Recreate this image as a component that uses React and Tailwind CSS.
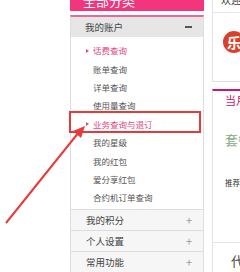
const font = { fontFamily: "'Noto Sans CJK SC', 'Noto Sans', sans-serif" };

const items = [
  { label: "话费查询", active: true },
  { label: "账单查询" },
  { label: "详单查询" },
  { label: "使用量查询" },
  { label: "业务查询与退订", active: true },
  { label: "我的星级" },
  { label: "我的红包" },
  { label: "爱分享红包" },
  { label: "合约机订单查询" },
];

const sections = ["我的积分", "个人设置", "常用功能"];

export default function App() {
  return (
    <div className="relative flex w-[240px] h-[272px] overflow-hidden bg-white whitespace-nowrap" style={font}>
      <div className="w-[70px] shrink-0" />

      {/* left menu */}
      <div className="w-[134px] shrink-0 flex flex-col">
        <div className="h-[11px] overflow-hidden bg-[#f2357c] pl-[13px]">
          <div className="-mt-[7px] text-[13px] leading-[15px] text-white">全部分类</div>
        </div>
        <div className="h-[5px]" />
        <div className="flex-1 flex flex-col border-t-2 border-[#e8689a] border-x border-x-[#dedede]">
          <div className="h-[20px] shrink-0 flex items-center justify-between bg-[#e6e6e6] pl-[14px] pr-[11px] text-[9.5px] text-[#444]">
            <span>我的账户</span>
            <span className="block w-[7px] h-[2px] bg-[#555]" />
          </div>
          <div className="pt-[4px] pb-[2px]">
            {items.map((it) => (
              <div
                key={it.label}
                className={
                  "h-[18.4px] flex items-center text-[8.5px] " +
                  (it.active ? "text-[#e2477f]" : "text-[#555]")
                }
              >
                <span className="w-[22px] flex justify-end pr-[4px]">
                  {it.active && (
                    <span className="block w-0 h-0 border-y-[2.5px] border-y-transparent border-l-[3px] border-l-[#e2477f]" />
                  )}
                </span>
                {it.label}
              </div>
            ))}
          </div>
          {sections.map((s) => (
            <div
              key={s}
              className="h-[21px] shrink-0 flex items-center justify-between border-t border-[#dcdcdc] bg-[#f6f6f6] pl-[15px] pr-[11px] text-[9.5px] text-[#444]"
            >
              <span>{s}</span>
              <span className="text-[11px] leading-none text-[#999]">+</span>
            </div>
          ))}
        </div>
      </div>

      <div className="w-[8px] shrink-0" />

      {/* right content */}
      <div className="flex-1 min-w-0 flex flex-col">
        <div className="h-[82px] shrink-0 flex flex-col border-l border-b border-[#e2e2e2]">
          <div className="h-[13px] overflow-hidden border-b border-[#e6e6e6] pl-[8px]">
            <div className="-mt-[6px] text-[10px] leading-[12px] text-[#444]">欢迎</div>
          </div>
          <div className="pt-[18px] pl-[10px]">
            <div className="w-[22px] h-[22px] rounded-full bg-[#d8402c] flex items-center justify-center text-white text-[14px] font-bold leading-none">
              乐
            </div>
          </div>
        </div>
        <div className="h-[7px]" />
        <div className="flex-1 flex flex-col border-l border-[#e2e2e2] border-t-2 border-t-[#c8186f]">
          <div className="h-[152px] border-b border-[#e4e4e4] pl-[12px]">
            <div className="pt-[2px] text-[11px] leading-[14px] text-[#b81a6c]">当月</div>
            <div className="pt-[25px] text-[13px] leading-[16px] text-[#86a886]">套餐</div>
            <div className="pt-[30px] text-[7.5px] leading-[10px] text-[#333]">推荐</div>
          </div>
          <div className="pt-[10px] pl-[18px] text-[13px] leading-[16px] text-[#444]">代</div>
        </div>
      </div>

      {/* annotation overlay */}
      <div className="absolute left-[69px] top-[111px] w-[132px] h-[22px] border-2 border-[#e53a3a]" />
      <svg className="absolute left-0 top-0" width="240" height="272" viewBox="0 0 240 272">
        <line x1="6" y1="223" x2="79" y2="132" stroke="#e63b3b" strokeWidth="2" />
        <polygon points="85,126 73,131 81,138" fill="#e63b3b" />
      </svg>
    </div>
  );
}
